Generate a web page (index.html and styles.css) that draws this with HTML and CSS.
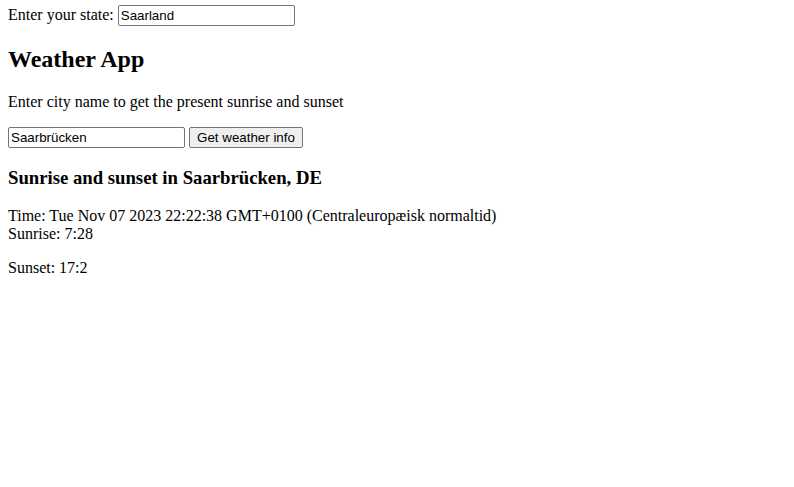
FILE: index.html
```html
<!DOCTYPE html>
<html>
<head>
<meta charset="utf-8">
<link rel="stylesheet" href="styles.css">
</head>
<body>
<label class="state">Enter your state: <input class="field" type="text" value="Saarland"></label>
<h2 class="title">Weather App</h2>
<p class="intro">Enter city name to get the present sunrise and sunset</p>
<div class="search"><input class="field" type="text" value="Saarbrücken"> <button class="btn">Get weather info</button></div>
<h3 class="place">Sunrise and sunset in Saarbrücken, DE</h3>
<p class="info">Time: Tue Nov 07 2023 22:22:38 GMT+0100 (Centraleuropæisk normaltid)<br>Sunrise: 7:28</p>
<p class="info">Sunset: 17:2</p>
</body>
</html>
```
FILE: styles.css
```css
body {
  margin: 5px 8px 8px;
  font-family: "Liberation Serif", "Times New Roman", serif;
  font-size: 16px;
  color: #000;
  background: #fff;
}
.field {
  font-family: "Liberation Sans", Arial, sans-serif;
  font-size: 13.333px;
  box-sizing: border-box;
  width: 177px;
  height: 21px;
  padding: 1px 2px;
  border: 1px solid #767676;
  border-radius: 2px;
  color: #000;
  background: #fff;
}
.btn {
  font-family: "Liberation Sans", Arial, sans-serif;
  font-size: 13.333px;
  box-sizing: border-box;
  width: 114px;
  height: 21px;
  padding: 1px 6px;
  border: 1px solid #767676;
  border-radius: 2px;
  background: #efefef;
  color: #000;
}
.title {
  font-size: 1.5em;
  margin: 0.83em 0;
}
.place {
  font-size: 1.17em;
  margin: 1em 0;
}
.intro, .info {
  margin: 1em 0;
}
```
